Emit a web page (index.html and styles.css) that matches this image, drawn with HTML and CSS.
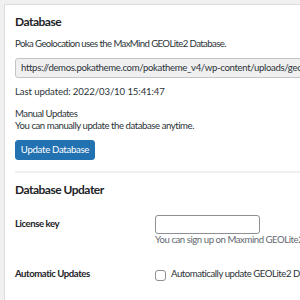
FILE: index.html
```html
<!DOCTYPE html>
<html>
<head>
<meta charset="utf-8">
<link rel="stylesheet" href="styles.css">
</head>
<body>
<div class="panel">
  <h2 class="title">Database</h2>
  <p class="text intro">Poka Geolocation uses the MaxMind GEOLite2 Database.</p>
  <div class="path">https://demos.pokatheme.com/pokatheme_v4/wp-content/uploads/geolocation/GeoLite2-Country.mmdb</div>
  <p class="text updated">Last updated: 2022/03/10 15:41:47</p>
  <p class="text manual">Manual Updates</p>
  <p class="text">You can manually update the database anytime.</p>
  <button class="btn">Update Database</button>
  <hr class="sep">
  <h2 class="title second">Database Updater</h2>
  <div class="row license">
    <div class="label">License key</div>
    <div class="field">
      <div class="input"></div>
      <div class="desc">You can sign up on Maxmind GEOLite2 to get your license key.</div>
    </div>
  </div>
  <div class="row auto">
    <div class="label">Automatic Updates</div>
    <div class="field check">
      <span class="box"></span>
      <span class="checklabel">Automatically update GEOLite2 Database weekly</span>
    </div>
  </div>
</div>
</body>
</html>
```
FILE: styles.css
```css
html, body { margin: 0; padding: 0; }
body {
  background: #f0f0f1;
  padding: 4px 0 0 4px;
  overflow: hidden;
  font-family: Lato, "Open Sans", sans-serif;
  color: #2c3338;
  font-size: 9.6px;
  letter-spacing: -0.45px;
  line-height: 12px;
  width: 300px;
  height: 300px;
  box-sizing: border-box;
}
.panel {
  background: #fff;
  border: 1px solid #dcdcde;
  padding: 10px 10px 20px 10px;
  width: 600px;
  height: 400px;
}
.title {
  margin: 0;
  font-size: 12px;
  font-weight: 700;
  color: #1d2327;
  line-height: 14px;
  letter-spacing: -0.5px;
}
.text { margin: 0; }
.intro { margin-top: 9px; letter-spacing: -0.6px; }
.path {
  margin-top: 8px;
  height: 20px;
  box-sizing: border-box;
  border: 1px solid #c3c4c7;
  border-radius: 3px;
  background: #f0f0f1;
  padding: 0 5px;
  line-height: 18px;
  letter-spacing: -0.35px;
  white-space: nowrap;
  color: #2c3338;
}
.updated { margin-top: 8px; letter-spacing: -0.1px; }
.manual { margin-top: 10px; }
.btn {
  display: block;
  margin-top: 8px;
  height: 20px;
  width: 80px;
  background: #2271b1;
  border: 1px solid #2271b1;
  border-radius: 3px;
  color: #fff;
  font-family: inherit;
  font-size: 9.6px;
  letter-spacing: -0.3px;
  line-height: 18px;
  padding: 0;
}
.sep {
  border: 0;
  border-top: 2px solid #f0f0f1;
  margin: 11px 0 0 0;
}
.second { margin-top: 10px; }
.row { display: flex; }
.label {
  width: 140px;
  flex: none;
  font-weight: 700;
  color: #1d2327;
}
.license { margin-top: 18px; }
.license .label { padding-top: 3px; }
.input {
  width: 105px;
  height: 19px;
  box-sizing: border-box;
  border: 1px solid #8c8f94;
  border-radius: 3px;
}
.desc {
  color: #646970;
  white-space: nowrap;
}
.auto { margin-top: 22px; }
.check { display: flex; align-items: center; gap: 5px; height: 12px; }
.box {
  width: 11px;
  height: 11px;
  box-sizing: border-box;
  border: 1px solid #8c8f94;
  border-radius: 3px;
  margin-top: 3px;
}
.checklabel { white-space: nowrap; }
```
